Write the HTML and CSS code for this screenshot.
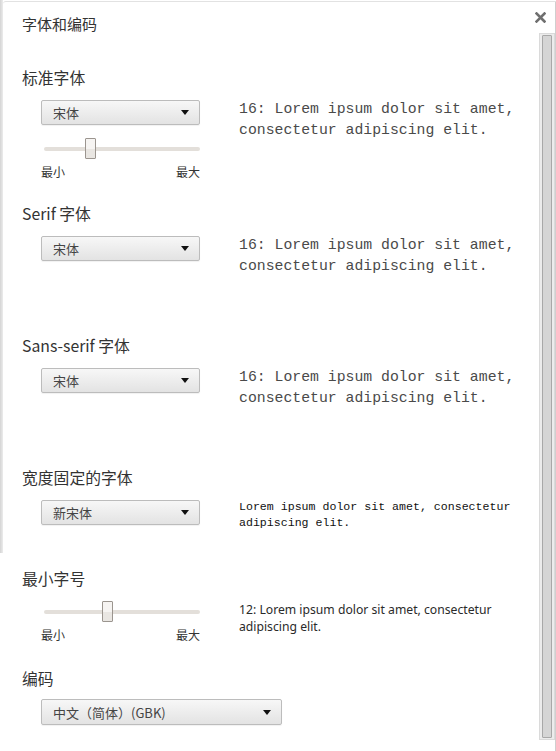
FILE: index.html
```html
<!DOCTYPE html>
<html lang="zh-CN">
<head>
    <meta charset="UTF-8">
    <title>字体和编码</title>
    <link rel="stylesheet" href="styles.css">
</head>
<body>
    <div class="shade"></div>
    <div class="dialog">
        <div class="header">
            <h1 class="title">字体和编码</h1>
            <span class="close">
                <svg width="11" height="11" viewBox="0 0 11 11"><path d="M1.5 1.5 L9.5 9.5 M9.5 1.5 L1.5 9.5" stroke="#6f6f6f" stroke-width="2.6" stroke-linecap="square"/></svg>
            </span>
        </div>
        <div class="body">
            <div class="content">
                <div class="section s-standard">
                    <div class="label">标准字体</div>
                    <div class="row">
                        <div class="controls">
                            <div class="select"><span>宋体</span><i class="arrow"></i></div>
                            <div class="slider">
                                <div class="track"><div class="thumb" style="left: 41px"></div></div>
                            </div>
                            <div class="range-labels"><span>最小</span><span>最大</span></div>
                        </div>
                        <div class="sample sample-serif">16: Lorem ipsum dolor sit amet, consectetur adipiscing elit.</div>
                    </div>
                </div>

                <div class="section s-serif">
                    <div class="label">Serif 字体</div>
                    <div class="row">
                        <div class="controls">
                            <div class="select"><span>宋体</span><i class="arrow"></i></div>
                        </div>
                        <div class="sample sample-serif">16: Lorem ipsum dolor sit amet, consectetur adipiscing elit.</div>
                    </div>
                </div>

                <div class="section s-sans">
                    <div class="label">Sans-serif 字体</div>
                    <div class="row">
                        <div class="controls">
                            <div class="select"><span>宋体</span><i class="arrow"></i></div>
                        </div>
                        <div class="sample sample-serif">16: Lorem ipsum dolor sit amet, consectetur adipiscing elit.</div>
                    </div>
                </div>

                <div class="section s-fixed">
                    <div class="label">宽度固定的字体</div>
                    <div class="row">
                        <div class="controls">
                            <div class="select"><span>新宋体</span><i class="arrow"></i></div>
                        </div>
                        <div class="sample sample-mono">Lorem ipsum dolor sit amet, consectetur adipiscing elit.</div>
                    </div>
                </div>

                <div class="section s-minsize">
                    <div class="label">最小字号</div>
                    <div class="row">
                        <div class="controls">
                            <div class="slider slider-first">
                                <div class="track"><div class="thumb" style="left: 58px"></div></div>
                            </div>
                            <div class="range-labels"><span>最小</span><span>最大</span></div>
                        </div>
                        <div class="sample sample-small">12: Lorem ipsum dolor sit amet, consectetur adipiscing elit.</div>
                    </div>
                </div>

                <div class="section s-encoding">
                    <div class="label">编码</div>
                    <div class="row">
                        <div class="controls">
                            <div class="select select-wide"><span>中文（简体）(GBK)</span><i class="arrow"></i></div>
                        </div>
                    </div>
                </div>
            </div>
            <div class="scrollbar"><div class="scroll-thumb"></div></div>
        </div>
    </div>
</body>
</html>
```

FILE: styles.css
```css
html, body {
    margin: 0;
    padding: 0;
    height: 751px;
    overflow: hidden;
    background-color: #fff;
}
body {
    display: flex;
    align-items: flex-start;
    font-family: "Noto Sans CJK SC", sans-serif;
    color: #333;
}
.shade {
    width: 3px;
    height: 553px;
    flex-shrink: 0;
    background: linear-gradient(to right, #d4d4d4, #ececec);
}
.dialog {
    flex: 1;
    height: 749px;
    margin-top: 1px;
    border-top: 1px solid #e2e2e2;
    border-right: 1px solid #cfcfcf;
    border-top-left-radius: 3px;
    background-color: #fff;
    display: flex;
    flex-direction: column;
}
.header {
    height: 31px;
    display: flex;
    justify-content: space-between;
    align-items: flex-start;
    padding: 0 9px 0 19px;
}
.title {
    margin: 12px 0 0;
    font-size: 15px;
    font-weight: normal;
    line-height: 20px;
    color: #333;
}
.close {
    margin-top: 10px;
    width: 11px;
    height: 11px;
    display: flex;
}
.body {
    flex: 1;
    display: flex;
    align-items: flex-start;
}
.content {
    flex: 1;
    padding: 35px 0 0 19px;
}
.scrollbar {
    width: 10px;
    height: 703px;
    padding: 1px 2px;
    border: 1px solid #dadada;
    background-color: #ececec;
}
.scroll-thumb {
    height: 701px;
    border: 1px solid #a8a8a8;
    border-radius: 1px;
    background-color: #d5d5d5;
}
.section {
    box-sizing: border-box;
}
.s-standard { height: 136px; }
.s-serif, .s-sans { height: 132px; }
.s-fixed { height: 101px; }
.s-minsize { height: 100px; }
.label {
    font-size: 15.8px;
    line-height: 20px;
    color: #333;
}
.row {
    display: flex;
    align-items: flex-start;
    gap: 39px;
    margin-top: 12px;
    padding-left: 19px;
}
.s-encoding .row {
    margin-top: 10px;
}
.controls {
    width: 159px;
    flex-shrink: 0;
}
.select {
    box-sizing: border-box;
    height: 25px;
    width: 159px;
    padding: 0 10px 0 11px;
    display: flex;
    align-items: center;
    justify-content: space-between;
    border: 1px solid #bcbcbc;
    border-radius: 2px;
    background: linear-gradient(#f7f7f7, #e3e3e3);
    box-shadow: 0 1px 1px rgba(0, 0, 0, 0.06);
    font-size: 13px;
    color: #444;
}
.select-wide {
    width: 241px;
    height: 26px;
}
.arrow {
    width: 0;
    height: 0;
    border-left: 4.5px solid transparent;
    border-right: 4.5px solid transparent;
    border-top: 5px solid #111;
}
.slider {
    height: 21px;
    margin-top: 13px;
    padding-left: 3px;
    display: flex;
    align-items: center;
}
.slider-first {
    margin-top: 0;
}
.track {
    position: relative;
    width: 158px;
    height: 4px;
    border-radius: 2px;
    background-color: #e3dfda;
}
.thumb {
    position: absolute;
    top: -9px;
    box-sizing: border-box;
    width: 11px;
    height: 21px;
    border: 1px solid #9b958f;
    border-radius: 1px;
    background: linear-gradient(#f6f4f2 50%, #e9e6e2 50%);
}
.range-labels {
    display: flex;
    justify-content: space-between;
    margin-top: 5px;
    width: 159px;
    font-size: 12px;
    line-height: 16px;
    color: #333;
}
.sample {
    width: 285px;
    color: #333;
}
.sample-serif {
    margin-top: -1px;
    font-family: "Liberation Mono", monospace;
    font-size: 14.8px;
    line-height: 21px;
    color: #4a4a4a;
}
.sample-mono {
    margin-top: -1px;
    font-family: "Liberation Mono", monospace;
    font-size: 11.6px;
    line-height: 16px;
    color: #111;
}
.sample-small {
    margin-top: 0;
    width: 280px;
    font-family: "Noto Sans", sans-serif;
    font-size: 12.2px;
    line-height: 17px;
    color: #2a2a2a;
}
```
